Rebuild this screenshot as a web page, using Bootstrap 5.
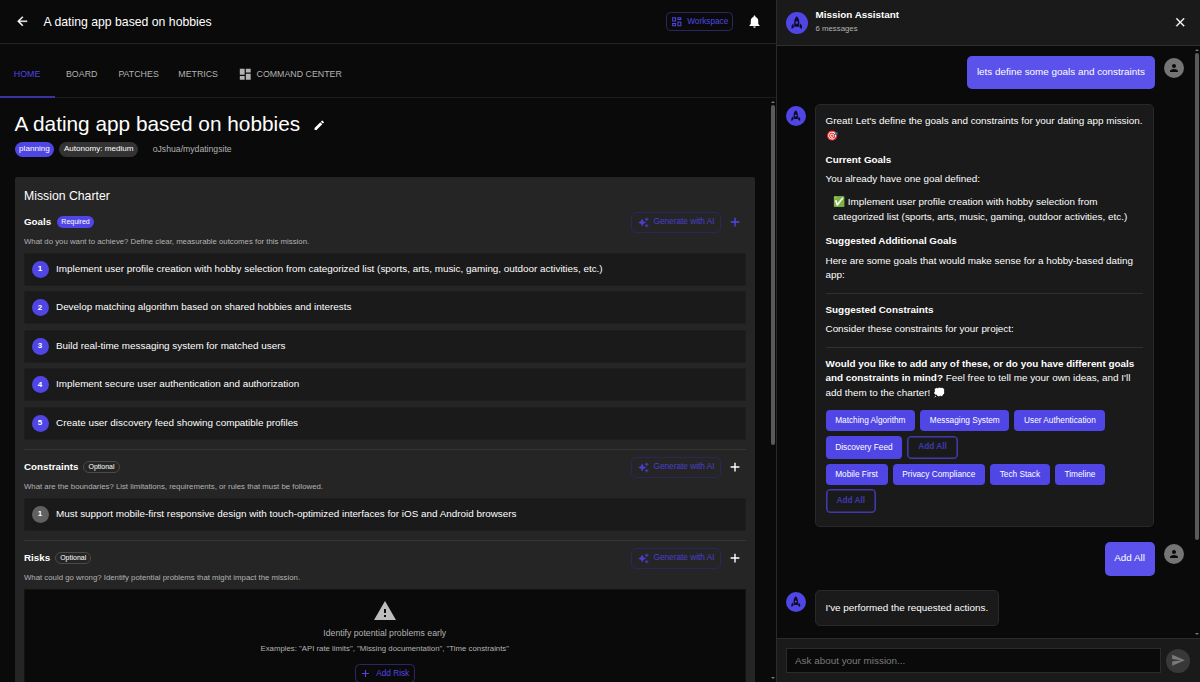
<!DOCTYPE html>
<html lang="en" data-bs-theme="dark">
<head>
<meta charset="utf-8">
<meta name="viewport" content="width=device-width, initial-scale=1">
<title>Mission</title>
<link href="https://cdn.jsdelivr.net/npm/bootstrap@5.3.0/dist/css/bootstrap.min.css" rel="stylesheet">
<style>
:root{--ind:#4f46e5;--dim:#b3b3b3}
body{font-family:"Liberation Sans",Arial,sans-serif;font-size:9.89px;line-height:1.5;background:#0a0a0a;color:#fff;height:682px}
svg{display:block;fill:currentColor;flex:none}
p{margin:0}
.main-pane{width:777px;border-right:1px solid #2b2b2b}
.topbar{height:44px;padding:0 14px 0 14.5px;border-bottom:1px solid #242424}
.topbar .ttl,.charter h2{font-size:12.25px;font-weight:400;line-height:20px;margin:0}
.btn-line{font-size:8.26px;line-height:14px;color:var(--ind);border:1px solid #2b2763;border-radius:4.5px;padding:0;display:inline-flex;align-items:center;justify-content:center}
.tabs{height:54px;padding-top:9px;border-bottom:1px solid #1d1d1d;font-size:8.83px}
.tabs a{color:var(--dim);text-decoration:none;display:flex;align-items:center;height:45px;margin-bottom:-1px;border-bottom:2px solid transparent}
.tabs a.on{color:var(--ind);border-color:#3a34a0}
.body-pane{min-height:0;overflow:hidden}
.inner{width:755px;padding:13px 0 0 14.5px}
h1{font-size:20.81px;font-weight:400;line-height:26px;margin:0}
.pill{font-size:8.1px;line-height:14px;height:14.5px;border-radius:8px;padding:0 4.6px;background:#333}
.pill.ind{background:var(--ind)}
.charter{background:#252525;border-radius:2px;margin-top:20px;padding:9px 9.5px 0;height:600px}
.sec{height:41px}
.sec .top-row{height:21.5px}
.sec h3{font-size:9.8px;font-weight:700;margin:0}
.tag{font-size:7px;line-height:12px;height:12px;border-radius:6px;padding:0 4.6px;background:var(--ind)}
.tag.opt{background:none;border:1px solid #4a4a4a;line-height:10.5px;padding:0 4px}
.cap{font-size:7.8px;color:var(--dim)}
.gen{width:90px;height:21.5px;opacity:.85}
.goal{height:33px;background:#1a1a1a;border:1px solid #1e1e1e;margin-bottom:5.5px;padding-left:6.5px;gap:7.5px}
.num{width:17px;height:17px;border-radius:50%;background:var(--ind);font-size:8px;font-weight:700;display:flex;align-items:center;justify-content:center}
.rule{height:1px;background:#363636}
.empty{background:#0a0a0a;height:140px;border:1px solid #141414;color:var(--dim)}
.sbar{width:8px}
.sbar i{display:block;width:4px;background:#5a5a5a;border-radius:2px}
.tri{width:0;height:0;border:2.2px solid transparent}
.up{border-bottom:2.6px solid #777;border-top:0}
.dn{border-top:2.6px solid #777;border-bottom:0}
.chat-head{height:46px;background:#1a1a1a;border-bottom:1px solid #303030;padding:0 15px 0 9px}
.av{width:20px;height:20px;border-radius:50%;background:var(--ind);color:#0d0b26;display:flex;align-items:center;justify-content:center;flex:none}
.av.me{background:#757575;color:#0a0a0a}
.bub{background:#1a1a1a;border:1px solid #292929;border-radius:5px;padding:9px 9.5px}
.bub.me{background:#5b52eb;border:0;height:33.5px;padding:0 9.6px;display:flex;align-items:center}
.bub p,.bub ul,.bub h4{line-height:14.5px}
.bub h4{font-size:9.89px;font-weight:700;margin:0}
.act{font-size:8.28px;background:var(--ind);color:#fff;border:0;border-radius:4px;padding:0 9.7px;height:21px;line-height:21px;font-weight:400}
.act.all{background:none;border:1px solid #403aae;box-shadow:inset 0 0 0 .6px #403aae;color:#3f39b0;font-weight:700;height:23.5px;line-height:20px;padding:0 10px}
.ask{height:44px;background:#1a1a1a;border-top:1px solid #2c2c2c;padding:0 10px 0 9px}
.ask input{width:375px;height:24.5px;background:#0a0a0a;border:1px solid #2b2b2b;border-radius:0;font-size:9.89px;padding:0 8px;color:#fff}
.ask input::placeholder{color:#7b7b7b;opacity:1}
.send{width:24px;height:24px;border-radius:50%;background:#383838;color:#7a7a7a}
</style>
</head>
<body class="d-flex overflow-hidden">
<svg width="0" height="0" class="position-absolute">
 <symbol id="rocket" viewBox="0 0 24 24"><path fill-rule="evenodd" d="M12 .5C9 3.500 7.500 7 7.500 11v8h9v-8c0-4-1.500-7.500-4.500-10.500zm0 13.500a2.300 2.300 0 1 1 0-4.600 2.300 2.300 0 0 1 0 4.600zM6 13.500 2.800 17v6l4.200-2.500zM18 13.500l3.200 3.500v6L17 20.500z"/></symbol>
 <symbol id="person" viewBox="0 0 24 24"><path d="M12 12c2.210 0 4-1.790 4-4s-1.790-4-4-4-4 1.790-4 4 1.790 4 4 4zm0 2c-2.670 0-8 1.340-8 4v2h16v-2c0-2.660-5.330-4-8-4z"/></symbol>
 <symbol id="plus" viewBox="0 0 24 24"><path d="M19.500 13.200h-6.300v6.300h-2.400v-6.300H4.500v-2.400h6.300V4.500h2.400v6.300h6.300z"/></symbol>
 <symbol id="spark" viewBox="0 0 24 24"><path d="m19 9 1.250-2.750L23 5l-2.750-1.250L19 1l-1.250 2.750L15 5l2.750 1.250zM19 15l-1.250 2.750L15 19l2.750 1.250L19 23l1.250-2.750L23 19l-2.750-1.250zM11.500 9.500 9 4 6.500 9.500 1 12l5.500 2.500L9 20l2.500-5.500L17 12z" stroke="currentColor" stroke-width=".8"/></symbol>
</svg>

<main class="main-pane d-flex flex-column flex-shrink-0">
 <header class="topbar d-flex align-items-center flex-shrink-0">
  <svg width="14.500" height="14.500" viewBox="0 0 24 24" stroke="currentColor" stroke-width=".6"><path d="M20 11H7.830l5.590-5.590L12 4l-8 8 8 8 1.410-1.410L7.830 13H20z"/></svg>
  <span class="ttl" style="margin-left:14.500px">A dating app based on hobbies</span>
  <button class="btn btn-line ms-auto" style="width:67px;height:19px;gap:5px"><svg width="11.500" height="11.500" viewBox="0 0 24 24" stroke="currentColor" stroke-width="2.200"><path fill="none" d="M3.500 3.500h6v7h-6zM14.500 3.500h6v4h-6zM14.500 12.500h6v8h-6zM3.500 15.500h6v5h-6z"/></svg>Workspace</button>
  <svg width="15" height="15" viewBox="0 0 24 24" style="margin-left:14px"><path d="M12 22c1.100 0 2-.9 2-2h-4c0 1.100.9 2 2 2zm6-6v-5c0-3.070-1.640-5.640-4.500-6.320V4c0-.83-.67-1.500-1.500-1.500s-1.500.67-1.500 1.500v.68C7.630 5.360 6 7.920 6 11v5l-2 2v1h16v-1z"/></svg>
 </header>
 <nav class="tabs d-flex flex-shrink-0">
  <a class="on" href="#" style="padding:0 14.500px 0 13.800px">HOME</a>
  <a href="#" style="margin-left:11.200px">BOARD</a>
  <a href="#" style="margin-left:21px">PATCHES</a>
  <a href="#" style="margin-left:19.500px">METRICS</a>
  <a href="#" style="margin-left:19.500px;gap:4.500px"><svg width="14.500" height="14.500" viewBox="0 0 24 24"><path d="M3 13h8V3H3zm0 8h8v-6H3zm10 0h8V11h-8zm0-18v6h8V3z"/></svg>COMMAND CENTER</a>
 </nav>
 <div class="body-pane d-flex flex-grow-1 justify-content-between">
  <div class="inner">
   <div class="d-flex align-items-center"><h1>A dating app based on hobbies</h1><svg width="12.500" height="12.500" viewBox="0 0 24 24" style="margin:2px 0 0 12.500px"><path d="M3 17.250V21h3.750L17.810 9.940l-3.750-3.750zM20.710 7.040a1 1 0 0 0 0-1.410l-2.340-2.340a1 1 0 0 0-1.410 0l-1.830 1.830 3.750 3.750z"/></svg></div>
   <div class="d-flex align-items-center" style="margin-top:5px"><span class="pill ind">planning</span><span class="pill" style="margin-left:5px">Autonomy: medium</span><span style="margin-left:14.500px;font-size:8.670px;color:var(--dim)">oJshua/mydatingsite</span></div>
   <section class="charter">
    <h2>Mission Charter</h2>
    <div class="sec" style="margin-top:6px">
     <div class="top-row d-flex align-items-center"><h3>Goals</h3><span class="tag" style="margin-left:5.500px">Required</span>
      <button class="btn btn-line gen ms-auto" style="gap:5px"><svg width="11" height="11"><use href="#spark"/></svg>Generate with AI</button>
      <svg width="14" height="14" style="margin:0 3.500px 0 7px;color:var(--ind)"><use href="#plus"/></svg></div>
     <p class="cap" style="margin-top:2.500px">What do you want to achieve? Define clear, measurable outcomes for this mission.</p>
    </div>
    <div class="goal d-flex align-items-center"><span class="num">1</span>Implement user profile creation with hobby selection from categorized list (sports, arts, music, gaming, outdoor activities, etc.)</div>
    <div class="goal d-flex align-items-center"><span class="num">2</span>Develop matching algorithm based on shared hobbies and interests</div>
    <div class="goal d-flex align-items-center"><span class="num">3</span>Build real-time messaging system for matched users</div>
    <div class="goal d-flex align-items-center"><span class="num">4</span>Implement secure user authentication and authorization</div>
    <div class="goal d-flex align-items-center mb-0"><span class="num">5</span>Create user discovery feed showing compatible profiles</div>
    <div class="rule" style="margin:9px 0 7px"></div>
    <div class="sec">
     <div class="top-row d-flex align-items-center"><h3>Constraints</h3><span class="tag opt" style="margin-left:5px">Optional</span>
      <button class="btn btn-line gen ms-auto" style="gap:5px"><svg width="11" height="11"><use href="#spark"/></svg>Generate with AI</button>
      <svg width="14" height="14" style="margin:0 3.500px 0 7px"><use href="#plus"/></svg></div>
     <p class="cap" style="margin-top:2.500px">What are the boundaries? List limitations, requirements, or rules that must be followed.</p>
    </div>
    <div class="goal d-flex align-items-center mb-0"><span class="num" style="background:#616161">1</span>Must support mobile-first responsive design with touch-optimized interfaces for iOS and Android browsers</div>
    <div class="rule" style="margin:9px 0 7px"></div>
    <div class="sec">
     <div class="top-row d-flex align-items-center"><h3>Risks</h3><span class="tag opt" style="margin-left:5px">Optional</span>
      <button class="btn btn-line gen ms-auto" style="gap:5px"><svg width="11" height="11"><use href="#spark"/></svg>Generate with AI</button>
      <svg width="14" height="14" style="margin:0 3.500px 0 7px"><use href="#plus"/></svg></div>
     <p class="cap" style="margin-top:2.500px">What could go wrong? Identify potential problems that might impact the mission.</p>
    </div>
    <div class="empty d-flex flex-column align-items-center">
     <svg width="24" height="24" viewBox="0 0 24 24" style="margin-top:9.500px;color:#bdbdbd"><path d="M1 21h22L12 2zm12-3h-2v-2h2zm0-4h-2v-4h2z"/></svg>
     <p style="font-size:8.710px;margin-top:4px">Identify potential problems early</p>
     <p class="cap" style="margin-top:3px">Examples: "API rate limits", "Missing documentation", "Time constraints"</p>
     <button class="btn btn-line" style="width:60px;height:19px;gap:5px;margin-top:9.500px"><svg width="11" height="11"><use href="#plus"/></svg>Add Risk</button>
    </div>
   </section>
  </div>
  <div class="sbar d-flex flex-column align-items-center" style="width:7px"><div class="tri up" style="margin-top:3px"></div><i style="height:340px;margin-top:2px"></i><div class="tri dn mt-auto" style="margin-bottom:3px"></div></div>
 </div>
</main>

<aside class="d-flex flex-column flex-grow-1">
 <header class="chat-head d-flex align-items-center flex-shrink-0">
  <span class="av" style="width:22px;height:22px"><svg width="13.500" height="13.500"><use href="#rocket"/></svg></span>
  <div style="margin-left:7.500px"><div class="fw-bold" style="line-height:14px;margin-top:-2px">Mission Assistant</div><div class="cap" style="line-height:12px;margin-top:1px">6 messages</div></div>
  <svg class="ms-auto" width="14.500" height="14.500" viewBox="0 0 24 24" stroke="currentColor" stroke-width=".5" style="margin-right:-2px"><path d="M19 6.410 17.590 5 12 10.590 6.410 5 5 6.410 10.590 12 5 17.590 6.410 19 12 13.410 17.590 19 19 17.590 13.410 12z"/></svg>
 </header>
 <div class="d-flex flex-grow-1 overflow-hidden">
  <div class="d-flex flex-column flex-grow-1" style="padding:9.500px 8px 0 9px">
   <div class="d-flex justify-content-end" style="gap:9.500px"><div class="bub me">lets define some goals and constraints</div><span class="av me" style="margin-top:2px"><svg width="12" height="12"><use href="#person"/></svg></span></div>
   <div class="d-flex" style="gap:9px;margin-top:15px"><span class="av" style="margin-top:2px"><svg width="11.500" height="11.500"><use href="#rocket"/></svg></span>
    <div class="bub" style="width:338.500px;height:423px">
     <p>Great! Let's define the goals and constraints for your dating app mission. 🎯</p>
     <h4 style="margin-top:9.500px">Current Goals</h4>
     <p style="margin-top:5px">You already have one goal defined:</p>
     <ul class="list-unstyled mb-0" style="margin-top:7px;padding-left:7.500px;line-height:15.500px"><li>✅ Implement user profile creation with hobby selection from categorized list (sports, arts, music, gaming, outdoor activities, etc.)</li></ul>
     <h4 style="margin-top:9.500px">Suggested Additional Goals</h4>
     <p style="margin-top:5px">Here are some goals that would make sense for a hobby-based dating app:</p>
     <div class="rule" style="margin-top:10px;background:#303030"></div>
     <h4 style="margin-top:9.500px">Suggested Constraints</h4>
     <p style="margin-top:4.500px">Consider these constraints for your project:</p>
     <div class="rule" style="margin-top:10px;background:#303030"></div>
     <p style="margin-top:9px"><b>Would you like to add any of these, or do you have different goals and constraints in mind?</b> Feel free to tell me your own ideas, and I'll add them to the charter! 💭</p>
     <div class="d-flex flex-wrap align-items-center" style="margin-top:10px;gap:4.500px 5px">
      <button class="act">Matching Algorithm</button><button class="act">Messaging System</button><button class="act">User Authentication</button>
      <button class="act" style="height:23.500px">Discovery Feed</button><button class="act all">Add All</button>
     </div>
     <div class="d-flex flex-wrap align-items-center" style="margin-top:4.500px;gap:4.500px 5px">
      <button class="act">Mobile First</button><button class="act">Privacy Compliance</button><button class="act">Tech Stack</button><button class="act">Timeline</button>
      <button class="act all">Add All</button>
     </div>
    </div></div>
   <div class="d-flex justify-content-end" style="gap:9.500px;margin-top:15px"><div class="bub me">Add All</div><span class="av me" style="margin-top:2px"><svg width="12" height="12"><use href="#person"/></svg></span></div>
   <div class="d-flex" style="gap:9px;margin-top:14.500px"><span class="av" style="margin-top:2px"><svg width="11.500" height="11.500"><use href="#rocket"/></svg></span>
    <div class="bub d-flex align-items-center" style="height:36px"><p>I've performed the requested actions.</p></div></div>
  </div>
  <div class="sbar d-flex flex-column align-items-end" style="width:8px;padding-right:1px"><div class="tri up" style="margin-top:3px"></div><i style="height:487px;margin-top:2px"></i><div class="tri dn mt-auto" style="margin-bottom:3px"></div></div>
 </div>
 <div class="ask d-flex align-items-center justify-content-between flex-shrink-0">
  <input type="text" placeholder="Ask about your mission...">
  <span class="send d-flex align-items-center justify-content-center"><svg width="14.500" height="14.500" viewBox="0 0 24 24"><path d="M2.010 21 23 12 2.010 3 2 10l15 2-15 2z"/></svg></span>
 </div>
</aside>
<script src="https://cdn.jsdelivr.net/npm/bootstrap@5.3.0/dist/js/bootstrap.bundle.min.js"></script>
</body>
</html>
